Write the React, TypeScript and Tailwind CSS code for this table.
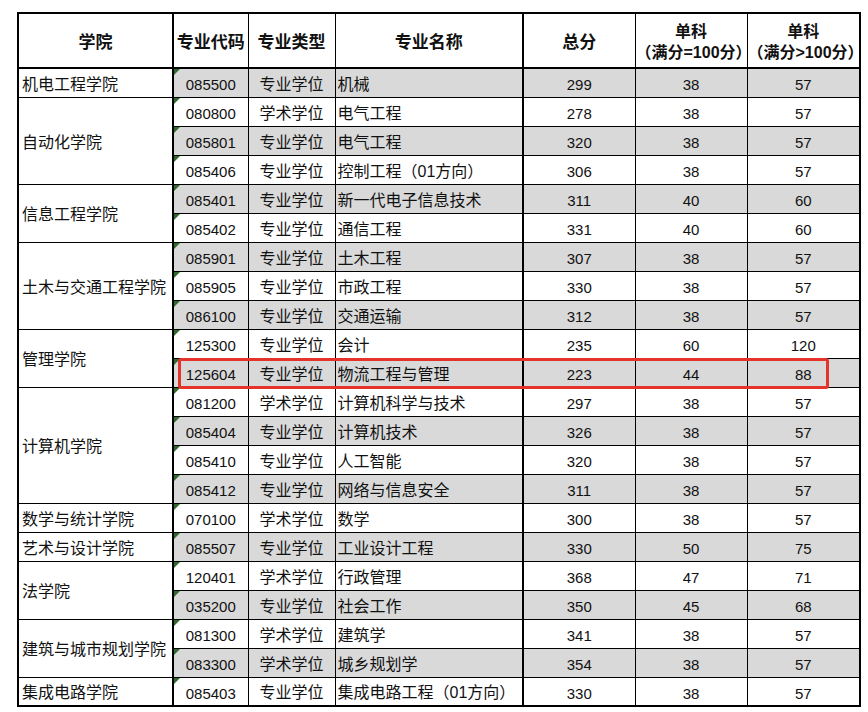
import React from "react";

type Row = [string, string, string, string, string, string];
type Group = { college: string; rows: Row[] };

const groups: Group[] = [
  { college: "机电工程学院", rows: [["085500", "专业学位", "机械", "299", "38", "57"]] },
  {
    college: "自动化学院",
    rows: [
      ["080800", "学术学位", "电气工程", "278", "38", "57"],
      ["085801", "专业学位", "电气工程", "320", "38", "57"],
      ["085406", "专业学位", "控制工程（01方向）", "306", "38", "57"],
    ],
  },
  {
    college: "信息工程学院",
    rows: [
      ["085401", "专业学位", "新一代电子信息技术", "311", "40", "60"],
      ["085402", "专业学位", "通信工程", "331", "40", "60"],
    ],
  },
  {
    college: "土木与交通工程学院",
    rows: [
      ["085901", "专业学位", "土木工程", "307", "38", "57"],
      ["085905", "专业学位", "市政工程", "330", "38", "57"],
      ["086100", "专业学位", "交通运输", "312", "38", "57"],
    ],
  },
  {
    college: "管理学院",
    rows: [
      ["125300", "专业学位", "会计", "235", "60", "120"],
      ["125604", "专业学位", "物流工程与管理", "223", "44", "88"],
    ],
  },
  {
    college: "计算机学院",
    rows: [
      ["081200", "学术学位", "计算机科学与技术", "297", "38", "57"],
      ["085404", "专业学位", "计算机技术", "326", "38", "57"],
      ["085410", "专业学位", "人工智能", "320", "38", "57"],
      ["085412", "专业学位", "网络与信息安全", "311", "38", "57"],
    ],
  },
  { college: "数学与统计学院", rows: [["070100", "学术学位", "数学", "300", "38", "57"]] },
  { college: "艺术与设计学院", rows: [["085507", "专业学位", "工业设计工程", "330", "50", "75"]] },
  {
    college: "法学院",
    rows: [
      ["120401", "学术学位", "行政管理", "368", "47", "71"],
      ["035200", "专业学位", "社会工作", "350", "45", "68"],
    ],
  },
  {
    college: "建筑与城市规划学院",
    rows: [
      ["081300", "学术学位", "建筑学", "341", "38", "57"],
      ["083300", "学术学位", "城乡规划学", "354", "38", "57"],
    ],
  },
  { college: "集成电路学院", rows: [["085403", "专业学位", "集成电路工程（01方向）", "330", "38", "57"]] },
];

export default function App() {
  let idx = 0;
  const body: React.ReactNode[] = [];
  groups.forEach((g, gi) => {
    g.rows.forEach((r, ri) => {
      const gray = idx % 2 === 0;
      const bg = gray ? "bg-[#d9d9d9]" : "bg-white";
      idx++;
      body.push(
        <tr key={`${gi}-${ri}`} className="h-[29px]">
          {ri === 0 && (
            <td
              rowSpan={g.rows.length}
              className="border border-black border-r-2 bg-white pl-[3px] pt-[4px] text-left align-middle whitespace-nowrap text-[16px]"
            >
              {g.college}
            </td>
          )}
          <td className={`relative border border-black pt-[4px] text-center text-[15px] ${bg}`}>
            <span className="absolute left-0 top-0 h-0 w-0 border-t-[6px] border-r-[6px] border-t-[#2f6b2a] border-r-transparent" />
            {r[0]}
          </td>
          <td className={`border border-black pt-[4px] text-center text-[16px] ${bg}`}>{r[1]}</td>
          <td className={`border border-black pl-[2px] pt-[4px] text-left text-[16px] whitespace-nowrap ${bg}`}>{r[2]}</td>
          <td className={`border border-black border-l-2 pt-[4px] text-center text-[15px] ${bg}`}>{r[3]}</td>
          <td className={`border border-black pt-[4px] text-center text-[15px] ${bg}`}>{r[4]}</td>
          <td className={`border border-black pt-[4px] text-center text-[15px] ${bg}`}>{r[5]}</td>
        </tr>
      );
    });
  });

  return (
    <div className="min-h-[712px] w-[868px] bg-white pt-[12px] pl-[17px]">
      <div
        className="relative w-[842px] text-[#111]"
        style={{ fontFamily: '"Liberation Sans", "Noto Sans CJK SC", sans-serif' }}
      >
        <table className="w-[842px] table-fixed border-collapse border-2 border-black leading-none">
          <colgroup>
            <col className="w-[155px]" />
            <col className="w-[75px]" />
            <col className="w-[87px]" />
            <col className="w-[188px]" />
            <col className="w-[112px]" />
            <col className="w-[112px]" />
            <col className="w-[113px]" />
          </colgroup>
          <thead>
            <tr className="h-[55px] font-bold text-[17px]">
              <th className="border border-black border-r-2 border-b-2 bg-white pt-[3px] text-center">学院</th>
              <th className="border border-black border-b-2 bg-white pt-[3px] text-center whitespace-nowrap">专业代码</th>
              <th className="border border-black border-b-2 bg-white pt-[3px] text-center whitespace-nowrap">专业类型</th>
              <th className="border border-black border-b-2 bg-white pt-[3px] text-center">专业名称</th>
              <th className="border border-black border-l-2 border-b-2 bg-white pt-[3px] text-center">总分</th>
              <th className="border border-black border-b-2 bg-white pt-[3px] text-center text-[16px] leading-[21px] whitespace-nowrap">
                <div>单科</div>
                <div>（满分=100分）</div>
              </th>
              <th className="border border-black border-b-2 bg-white pt-[3px] text-center text-[16px] leading-[21px] whitespace-nowrap">
                <div>单科</div>
                <div>（满分&gt;100分）</div>
              </th>
            </tr>
          </thead>
          <tbody>{body}</tbody>
        </table>
        <div className="pointer-events-none absolute left-[161px] top-[346px] h-[31px] w-[651px] rounded-[3px] border-[3px] border-[#e3332b]" />
      </div>
    </div>
  );
}
